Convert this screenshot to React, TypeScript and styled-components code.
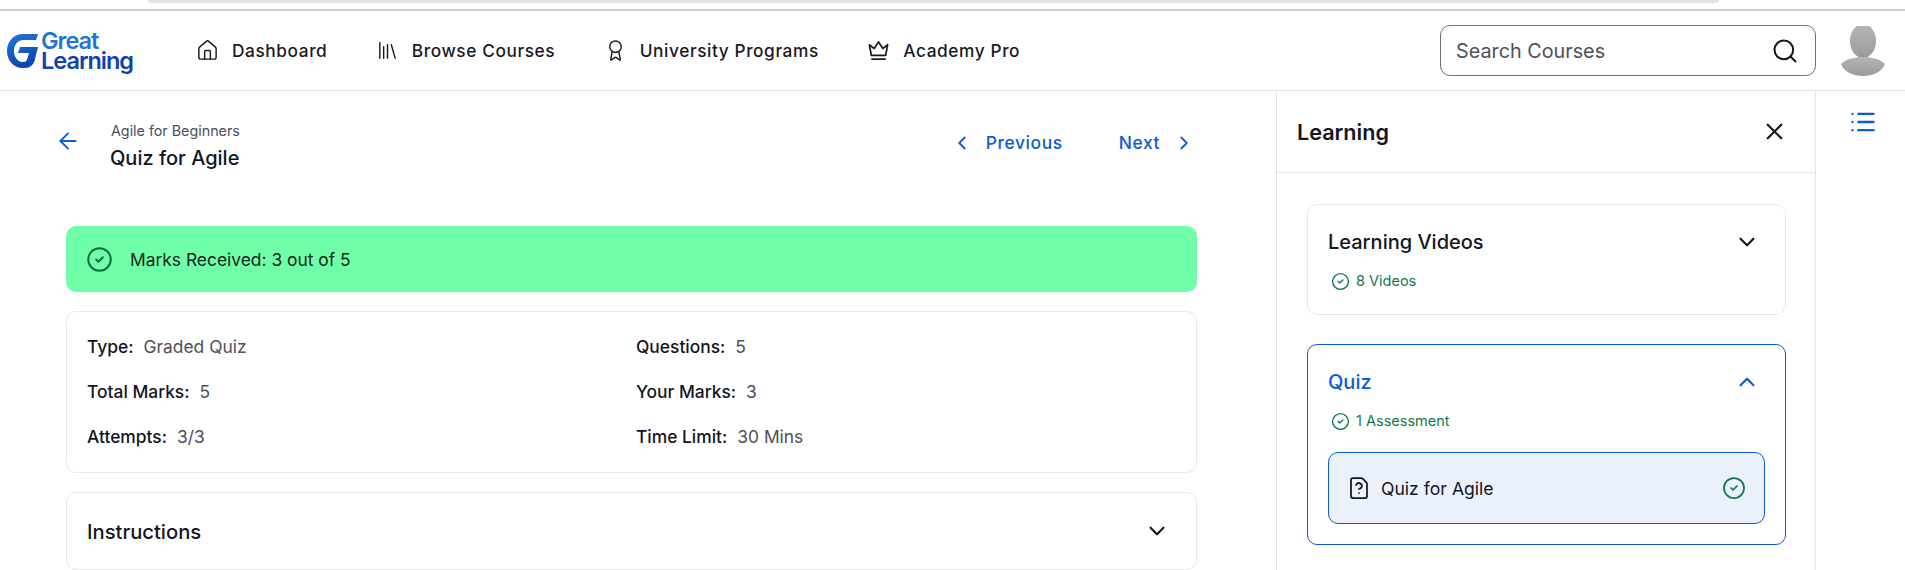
import styled, { createGlobalStyle } from "styled-components"
import { ArrowLeft, Award, ChevronDown, ChevronLeft, ChevronRight, ChevronUp, CircleCheck, FileQuestion, House, Library, List, Search, X } from "lucide-react"

const Global = createGlobalStyle`
    * { box-sizing: border-box; }
    html, body { margin: 0; height: 570px; overflow: hidden; background: #fff; }
    body { font-family: Inter, "Noto Sans", sans-serif; color: #15151f; }
`

const Page = styled.div`
    width: 1905px;
    height: 570px;
    overflow: hidden;
    display: flex;
    flex-direction: column;
`

const BrowserStrip = styled.div`
    height: 11px;
    flex: none;
    border-bottom: 2px solid #cccccc;
    padding: 0 186px 0 148px;
`

const StripBar = styled.div`
    height: 3px;
    background: #e2e2e2;
    border-radius: 0 0 10px 10px;
`

const Header = styled.header`
    height: 80px;
    flex: none;
    display: flex;
    align-items: center;
    padding: 0 19px 0 6px;
    border-bottom: 1px solid #e4e4e6;
`

const Logo = styled.div`
    width: 136px;
    display: flex;
    align-items: center;
    gap: 3px;
    flex: none;
`

const LogoText = styled.div`
    font-size: 23.5px;
    line-height: 20px;
    font-weight: 600;
    letter-spacing: -1px;
    color: #1f74d4;
    span { color: #1042ae; display: block; }
`

const Nav = styled.nav`
    display: flex;
    align-items: center;
    gap: 48.5px;
    margin-left: 54px;
    flex: 1;
`

const NavItem = styled.a`
    display: flex;
    align-items: center;
    gap: 13px;
    font-size: 17.3px;
    font-weight: 500;
    letter-spacing: 0.58px;
    color: #1a1a24;
`

const SearchBox = styled.div`
    width: 376px;
    height: 51px;
    border: 1px solid #6f6f7b;
    border-radius: 10px;
    display: flex;
    align-items: center;
    justify-content: space-between;
    padding: 0 16px 0 15px;
    font-size: 19.8px;
    color: #4f4f5c;
`

const Avatar = styled.svg`
    width: 46px;
    height: 50px;
    margin-left: 24px;
    flex: none;
`

const Body = styled.div`
    flex: 1;
    display: grid;
    grid-template-columns: 1276px 540px 89px;
    min-height: 0;
`

const Main = styled.main`
    padding: 30px 79px 0 66px;
    display: flex;
    flex-direction: column;
`

const TitleRow = styled.div`
    display: flex;
    align-items: flex-start;
    height: 105px;
`

const BackButton = styled.div`
    width: 56px;
    margin-left: -11px;
    color: #0b5cd5;
    display: flex;
    padding-top: 7px;
`

const TitleBlock = styled.div`
    flex: 1;
`

const Crumb = styled.div`
    font-size: 14.3px;
    line-height: 20px;
    color: #4f4f5c;
`

const Title = styled.div`
    font-size: 20px;
    line-height: 26px;
    margin-top: 4px;
    margin-left: -1px;
    font-weight: 500;
`

const Pager = styled.div`
    display: flex;
    gap: 56px;
    margin-right: 2px;
    padding-top: 10px;
`

const PagerLink = styled.a`
    display: flex;
    align-items: center;
    gap: 13px;
    color: #0b5cd5;
    font-size: 17.4px;
    font-weight: 500;
    letter-spacing: 0.6px;
    line-height: 24px;
`

const Banner = styled.div`
    height: 66px;
    background: #70ffa9;
    border-radius: 10px;
    display: flex;
    align-items: center;
    gap: 17px;
    padding-left: 20px;
    font-size: 17.4px;
    color: #15251f;
`

const Card = styled.div`
    border: 1px solid #e9e9ec;
    border-radius: 10px;
    margin-top: 19px;
`

const InfoCard = styled(Card)`
    padding: 23px 20px;
    display: grid;
    grid-template-columns: 549px 1fr;
    row-gap: 21px;
`

const InfoRow = styled.div`
    font-size: 17.4px;
    line-height: 24px;
    color: #4f4f5c;
    display: flex;
    gap: 10px;
    b { font-weight: 500; color: #15151f; }
`

const AccordionCard = styled(Card)`
    height: 78px;
    padding: 0 26px 0 20px;
    display: flex;
    align-items: center;
    justify-content: space-between;
    font-size: 20.2px;
    font-weight: 500;
`

const Sidebar = styled.aside`
    border-left: 1px solid #e4e4e6;
    border-right: 1px solid #e4e4e6;
`

const SideHead = styled.div`
    height: 82px;
    border-bottom: 1px solid #e4e4e6;
    display: flex;
    align-items: center;
    justify-content: space-between;
    padding: 0 27px 0 20px;
    font-size: 21.6px;
    font-weight: 600;
`

const SideList = styled.div`
    padding: 31px 29px 0 30px;
    display: flex;
    flex-direction: column;
    gap: 29px;
`

const Module = styled.div<{ $active?: boolean }>`
    border: 1px solid ${p => p.$active ? "#0b5cd5" : "#e9e9ec"};
    border-radius: 10px;
    padding: 24px 20px 20px;
`

const ModuleHead = styled.div<{ $active?: boolean }>`
    display: flex;
    align-items: center;
    justify-content: space-between;
    font-size: 20px;
    line-height: 26px;
    font-weight: 500;
    color: ${p => p.$active ? "#0b5cd5" : "#15151f"};
    padding-right: 5px;
`

const ModuleMeta = styled.div`
    display: flex;
    align-items: center;
    gap: 6px;
    margin-top: 16px;
    padding: 0 0 3px 3px;
    font-size: 14.5px;
    line-height: 20px;
    color: #0f7a4b;
`

const LessonRow = styled.div`
    height: 72px;
    margin-top: 18px;
    border: 1px solid #0b5cd5;
    border-radius: 10px;
    background: #eaf1fb;
    display: flex;
    align-items: center;
    padding: 0 18px;
    gap: 10px;
    font-size: 17.6px;
    font-weight: 400;
`

const LessonName = styled.div`
    flex: 1;
`

const Rail = styled.div`
    display: flex;
    justify-content: center;
    padding: 17px 0 0 4px;
    color: #0b5cd5;
`

const CheckBadge = ({ size, color = "#0f7a4b" }: { size: number, color?: string }) => <CircleCheck size={size} color={color} strokeWidth={1.75} />

const info = [
    ["Type:", "Graded Quiz"], ["Questions:", "5"],
    ["Total Marks:", "5"], ["Your Marks:", "3"],
    ["Attempts:", "3/3"], ["Time Limit:", "30 Mins"],
]

export default function App() {
    return <Page>
        <Global />
        <BrowserStrip><StripBar /></BrowserStrip>
        <Header>
            <Logo>
                <svg width="32" height="38" viewBox="0 0 32 38">
                    <defs>
                        <linearGradient id="logoFill" x1="0" y1="0" x2="0.4" y2="1">
                            <stop offset="0" stopColor="#1f7ad8" />
                            <stop offset="1" stopColor="#1046b2" />
                        </linearGradient>
                    </defs>
                    <path d="M32 2H17C7.500 2 1 9.500 1 19s6.500 17 16 17h2c5 0 8-3 9.500-7L32 15H14l-2 6h11l-2 6.500c-.7 2-2 2.500-4 2.500-5.500 0-9-5-9-11S11.500 8 17 8h13z" fill="url(#logoFill)" />
                </svg>
                <LogoText>Great<span>Learning</span></LogoText>
            </Logo>
            <Nav>
                <NavItem><House size={23} strokeWidth={1.5} />Dashboard</NavItem>
                <NavItem><Library size={23} strokeWidth={1.5} />Browse Courses</NavItem>
                <NavItem><Award size={23} strokeWidth={1.5} />University Programs</NavItem>
                <NavItem>
                    <svg width="23" height="23" viewBox="0 0 24 24" fill="none" stroke="currentColor" strokeWidth="1.8" strokeLinejoin="round">
                        <path d="M2.500 6l5 4L12 3l4.500 7 5-4-2 11H4.500z" />
                        <path d="M4.500 21h15" />
                    </svg>
                    Academy Pro
                </NavItem>
            </Nav>
            <SearchBox>Search Courses<Search size={28} color="#15151f" strokeWidth={1.75} /></SearchBox>
            <Avatar viewBox="0 0 46 50">
                <defs>
                    <linearGradient id="avatarFill" x1="0" y1="0" x2="0" y2="1">
                        <stop offset="0" stopColor="#b5b5b5" />
                        <stop offset="1" stopColor="#9b9b9b" />
                    </linearGradient>
                </defs>
                <ellipse cx="23" cy="15" rx="13" ry="17" fill="url(#avatarFill)" />
                <path d="M1 38c5-5 13-7 22-7s17 2 22 7c-3 8-12 12-22 12S4 46 1 38z" fill="url(#avatarFill)" />
            </Avatar>
        </Header>
        <Body>
            <Main>
                <TitleRow>
                    <BackButton><ArrowLeft size={26} strokeWidth={1.75} /></BackButton>
                    <TitleBlock>
                        <Crumb>Agile for Beginners</Crumb>
                        <Title>Quiz for Agile</Title>
                    </TitleBlock>
                    <Pager>
                        <PagerLink><ChevronLeft size={22} />Previous</PagerLink>
                        <PagerLink>Next<ChevronRight size={22} /></PagerLink>
                    </Pager>
                </TitleRow>
                <Banner><CheckBadge size={27} color="#0b6b41" />Marks Received: 3 out of 5</Banner>
                <InfoCard>
                    {info.map(([label, value]) => <InfoRow key={label}><b>{label}</b>{value}</InfoRow>)}
                </InfoCard>
                <AccordionCard>Instructions<ChevronDown size={26} strokeWidth={2} /></AccordionCard>
            </Main>
            <Sidebar>
                <SideHead>Learning<X size={27} strokeWidth={2} /></SideHead>
                <SideList>
                    <Module>
                        <ModuleHead>Learning Videos<ChevronDown size={26} strokeWidth={2} /></ModuleHead>
                        <ModuleMeta><CheckBadge size={19} />8 Videos</ModuleMeta>
                    </Module>
                    <Module $active>
                        <ModuleHead $active>Quiz<ChevronUp size={26} strokeWidth={2} /></ModuleHead>
                        <ModuleMeta><CheckBadge size={19} />1 Assessment</ModuleMeta>
                        <LessonRow>
                            <FileQuestion size={24} strokeWidth={1.75} />
                            <LessonName>Quiz for Agile</LessonName>
                            <CheckBadge size={24} />
                        </LessonRow>
                    </Module>
                </SideList>
            </Sidebar>
            <Rail><List size={28} strokeWidth={2} /></Rail>
        </Body>
    </Page>
}
